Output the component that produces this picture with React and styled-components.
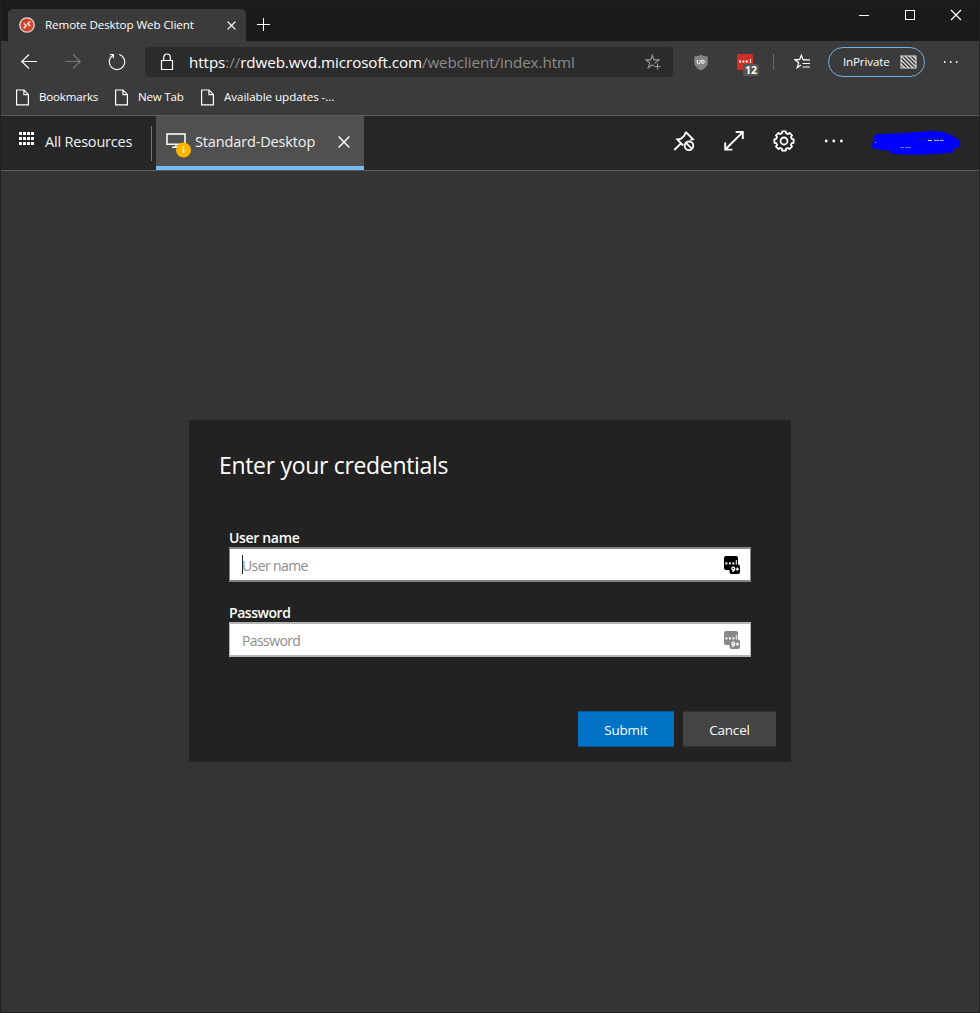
import React from "react";
import styled, { createGlobalStyle } from "styled-components";

const GlobalStyle = createGlobalStyle`
  * { box-sizing: border-box; }
  body { margin: 0; background: #333; font-family: "Open Sans", "Noto Sans", sans-serif; color: #fff; }
  svg { display: block; flex: none; }
  button, input { font-family: inherit; }
`;

const Window = styled.div`
  width: 980px;
  height: 1013px;
  display: flex;
  flex-direction: column;
  overflow: hidden;
  background: #343434;
  border: 1px solid #202020;
`;

const Label = styled.span`
  white-space: nowrap;
  font-size: ${(p) => p.$size}px;
  letter-spacing: ${(p) => p.$track || 0}px;
  line-height: 20px;
  color: ${(p) => p.$color || "#fff"};
`;

const TabStrip = styled.header`
  display: flex;
  height: 40px;
  flex: none;
  background: #1b1b1b;
  padding-left: 7px;
`;

const BrowserTab = styled.div`
  display: flex;
  align-items: center;
  width: 238px;
  height: 32px;
  margin-top: 8px;
  padding: 0 10px 0 11px;
  background: #3b3b3b;
  border-radius: 5px 5px 0 0;
`;

const TabTitle = styled(Label)`
  flex: 1;
  margin-left: 10px;
`;

const NewTab = styled.div`
  margin: 16px 0 0 11px;
`;

const WindowControls = styled.div`
  display: flex;
  margin-left: auto;
  padding: 8px 17px 0 0;
  gap: 34px;
`;

const Toolbar = styled.nav`
  display: flex;
  align-items: center;
  height: 42px;
  flex: none;
  background: #3b3b3b;
  padding-left: 19px;
`;

const NavIcons = styled.div`
  display: flex;
  gap: 26px;
  width: 125px;
`;

const AddressBar = styled.div`
  display: flex;
  align-items: center;
  width: 528px;
  height: 30px;
  padding: 0 11px 0 15px;
  background: #2b2b2b;
  border-radius: 4px;
`;

const Url = styled(Label)`
  flex: 1;
  margin-left: 15px;
`;

const Dim = styled.span`
  color: #8b8b8b;
`;

const Extensions = styled.div`
  display: flex;
  align-items: center;
  margin-left: 21px;
`;

const Manager = styled.div`
  position: relative;
  margin: 5px 14px 0 29px;
  width: 22px;
  height: 22px;
`;

const CountBadge = styled.span`
  position: absolute;
  left: 6px;
  top: 10px;
  width: 16px;
  height: 12px;
  border-radius: 2px;
  background: #565656;
  font: bold 10.5px/12px "Open Sans", sans-serif;
  text-align: center;
`;

const Separator = styled.div`
  width: 1px;
  height: ${(p) => p.$height}px;
  background: #666;
`;

const FavoritesSlot = styled.div`
  margin-left: 20px;
`;

const PrivatePill = styled.div`
  display: flex;
  align-items: center;
  justify-content: space-between;
  width: 97px;
  height: 30px;
  margin: 0 18px 0 17px;
  padding: 0 7px 0 14px;
  border: 1px solid #72b1e4;
  border-radius: 15px;
`;

const BookmarksBar = styled.div`
  display: flex;
  height: 33px;
  flex: none;
  padding: 0 14px;
  background: #3b3b3b;
  border-bottom: 1px solid #5c5c5c;
`;

const Bookmark = styled.div`
  display: flex;
  align-items: center;
  height: 28px;
  width: ${(p) => p.$width}px;
  gap: 9px;
`;

const AppBar = styled.div`
  display: flex;
  height: 55px;
  flex: none;
  background: #262626;
  border-bottom: 1px solid #5c5c5c;
`;

const AllResources = styled.div`
  display: flex;
  align-items: center;
  width: 150px;
  padding: 0 0 2px 18px;
  gap: 11px;
`;

const GridIcon = styled.div`
  margin-bottom: 7px;
`;

const BarDivider = styled(Separator)`
  margin: 10px 4px 0 0;
  background: #777;
`;

const ResourceTab = styled.div`
  display: flex;
  align-items: center;
  width: 208px;
  height: 54px;
  padding: 2px 14px 0 10px;
  background: #505050;
  border-bottom: 4px solid #6fbef5;
`;

const MonitorSlot = styled.div`
  margin-top: 5px;
`;

const ResourceName = styled(Label)`
  flex: 1;
  margin-left: 3px;
`;

const AppActions = styled.div`
  display: flex;
  align-items: center;
  margin-left: auto;
  padding: 0 16px 4px 0;
  gap: 28px;
`;

const AccountSlot = styled.div`
  margin: 4px 0 0 -3px;
`;

const Content = styled.main`
  flex: 1;
  padding: 249px 188px 0;
`;

const Dialog = styled.form`
  width: 602px;
  height: 342px;
  padding: 29px 15px 15px 30px;
  background: #222;
  border: 1px solid #262626;
  border-left: 0;
  border-right: 0;
`;

const Title = styled.h1`
  margin: 0;
  height: 78px;
  font-size: 23px;
  line-height: 30px;
  font-weight: 400;
  letter-spacing: -0.32px;
`;

const Field = styled.label`
  display: block;
  height: 75px;
  width: 522px;
  margin-left: 10px;
`;

const FieldName = styled.span`
  display: block;
  height: 19px;
  font-size: 14px;
  line-height: 20px;
  font-weight: 600;
  letter-spacing: ${(p) => p.$track}px;
  white-space: nowrap;
`;

const InputBox = styled.span`
  position: relative;
  display: flex;
  align-items: center;
  height: 35px;
  padding: 0 10px 0 12px;
  background: #fff;
  border: 1px solid ${(p) => (p.$focused ? "#858585" : "#b5b5b5")};
  border-bottom-width: 2px;
  border-top-width: 2px;
`;

const Input = styled.input`
  flex: 1;
  min-width: 0;
  height: 26px;
  padding: 1px 0 0;
  border: 0;
  outline: 0;
  background: transparent;
  font-size: 14px;
  letter-spacing: -0.6px;
  &::placeholder { color: #8c8c8c; opacity: 1; }
`;

const Caret = styled.i`
  position: absolute;
  left: 12px;
  top: 6px;
  width: 1px;
  height: 19px;
  background: #222;
`;

const Buttons = styled.div`
  display: flex;
  justify-content: flex-end;
  gap: 9px;
  margin-top: 33px;
`;

const Button = styled.button`
  width: ${(p) => (p.$primary ? 96 : 93)}px;
  height: 36px;
  padding: 2px 0 0;
  color: #fff;
  font-size: 13.4px;
  letter-spacing: -0.15px;
  border: solid ${(p) => (p.$primary ? "#08599a" : "#333")};
  border-width: 1px 0;
  background: ${(p) => (p.$primary ? "#0072c6" : "#444")};
`;

const Svg = ({ w, h, stroke = "#fff", sw = 1, children }) => (
  <svg width={w} height={h} viewBox={`0 0 ${w} ${h}`} fill="none" stroke={stroke} strokeWidth={sw}>
    {children}
  </svg>
);

const Cross = ({ size, sw }) => (
  <Svg w={size} h={size} sw={sw}>
    <path d={`M.6 .6L${size - 0.6} ${size - 0.6}M${size - 0.6} .6L.6 ${size - 0.6}`} />
  </Svg>
);

const Dots = ({ w, gap, r, start = 0.2 }) => (
  <Svg w={w} h={4} stroke="none">
    {[0, 1, 2].map((i) => (
      <circle key={i} cx={r + start + i * gap} cy="2" r={r} fill="#fff" />
    ))}
  </Svg>
);

const Favicon = () => (
  <Svg w={16} h={16}>
    <circle cx="8" cy="8" r="7.2" fill="#d6442a" stroke="#e3dcd9" strokeWidth="1.3" />
    <path d="M4.8 6.4L7.2 8.8L4.8 11.2M11.2 4.4L8.8 6.8L11.2 9.2" stroke="#fff" strokeWidth="1.3" />
  </Svg>
);

const PageIcon = () => (
  <Svg w={15} h={17} sw={1.2}>
    <path d="M1.6 1H9L13.4 5.4V15.9H1.6ZM8.9 1V5.6H13.4" />
  </Svg>
);

const PasswordIcon = ({ color }) => (
  <Svg w={16} h={18} stroke="none">
    <rect width="14" height="14" rx="2" fill={color} />
    <rect x="5.5" y="8.5" width="10.5" height="9.5" rx="2" fill={color} />
    <g fill="#fff">
      <rect x="1.4" y="6.4" width="2" height="2" />
      <rect x="4.9" y="6.4" width="2" height="2" />
      <rect x="8.4" y="6.4" width="2" height="2" />
      <rect x="11.8" y="4" width="1" height="4.6" />
    </g>
    <circle cx="9.2" cy="12.5" r="1.4" stroke="#fff" strokeWidth="1.2" />
    <path d="M10.5 12.5C10.5 14.5 10 15.4 8 15.4M11.6 13.1H15M13.3 11.4V14.8" stroke="#fff" strokeWidth="1.2" />
  </Svg>
);

const gearPath = (() => {
  const pts = [];
  for (let i = 0; i < 8; i++) {
    [[-15, 8], [-11, 9.8], [11, 9.8], [15, 8]].forEach(([off, r]) => {
      const a = ((i * 45 + off) * Math.PI) / 180;
      pts.push(`${(11 + r * Math.sin(a)).toFixed(2)} ${(11 - r * Math.cos(a)).toFixed(2)}`);
    });
  }
  return `M${pts.join("L")}Z`;
})();

const BrowserChrome = () => (
  <>
    <TabStrip>
      <BrowserTab>
        <Favicon />
        <TabTitle $size={11.6} $track={-0.09}>Remote Desktop Web Client</TabTitle>
        <Cross size={9} sw={1.3} />
      </BrowserTab>
      <NewTab>
        <Svg w={14} h={14}><path d="M6.5 1V14M0 7.5H13" /></Svg>
      </NewTab>
      <WindowControls>
        <Svg w={12} h={12}><path d="M1 6.5H11" /></Svg>
        <Svg w={12} h={12}><rect x="1.5" y="1.5" width="9" height="9" /></Svg>
        <Svg w={12} h={12} sw={1.2}><path d="M1 1L11 11M11 1L1 11" /></Svg>
      </WindowControls>
    </TabStrip>
    <Toolbar>
      <NavIcons>
        <Svg w={18} h={18} sw={1.1}><path d="M17 8.5H1.5M9 1.5L1.7 8.5L9 15.5" /></Svg>
        <Svg w={18} h={18} stroke="#777" sw={1.1}><path d="M1 8.5H16.5M9 1.5L16.3 8.5L9 15.5" /></Svg>
        <Svg w={18} h={18} sw={1.1}><path d="M11.2 1.5A7.7 7.7 0 1 1 5 2.3M1.9 1.5H5.4V5.3" /></Svg>
      </NavIcons>
      <AddressBar>
        <Svg w={14} h={18} sw={1.2}>
          <path d="M1.5 7.5H12.5V16.5H1.5ZM3.7 7.5V4.5A3.3 3.5 0 0 1 10.3 4.5V7.5" />
        </Svg>
        <Url $size={15.2} $track={-0.08}>
          https<Dim>://</Dim>rdweb.wvd.microsoft.com<Dim>/webclient/index.html</Dim>
        </Url>
        <Svg w={17} h={17} stroke="#999" sw={1.1}>
          <path d="M9.6 9.4L14 5.9H9L7.3 1.2L5.7 5.9H.8L4.7 8.9L3.2 13.8L7.3 10.9L9 12M12.5 9.5V15.5M9.5 12.5H15.5" />
        </Svg>
      </AddressBar>
      <Extensions>
        <svg width="14" height="17" viewBox="0 0 14 17">
          <path d="M7 .8C9 2 11 2.4 13.8 2.4V8C13.8 12 11 14.7 7 16.3C3 14.7 .2 12 .2 8V2.4C3 2.4 5 2 7 .8Z" fill="#858585" />
          <path d="M3.3 6V8.4A1.4 1.4 0 0 0 6.1 8.4V6M7.9 6V9.5H8.7A1.6 1.6 0 0 0 8.7 6.3H7.9" fill="none" stroke="#fff" />
        </svg>
        <Manager>
          <svg width="16" height="16" viewBox="0 0 16 16">
            <rect width="16" height="16" rx="1.5" fill="#d32d27" />
            <path d="M2 6.5h2v2h-2zM5.4 6.5h2v2h-2zM8.8 6.5h2v2h-2zM13 5h1v4h-1z" fill="#fff" />
          </svg>
          <CountBadge>12</CountBadge>
        </Manager>
        <Separator $height={16} />
      </Extensions>
      <FavoritesSlot>
        <Svg w={17} h={16} sw={1.2}>
          <path d="M10.6 5.6H9L7.3 1.3L5.6 5.6H.9L4.7 8.8L3.2 13.7L7 11M9.2 5.9H16M8.5 9.5H16M8.5 13H16" />
        </Svg>
      </FavoritesSlot>
      <PrivatePill>
        <Label $size={11.6} $track={-0.15}>InPrivate</Label>
        <Svg w={17} h={14}>
          <rect x="1" y="1" width="15" height="12" stroke="#ddd" />
          <path d="M1 9L5 13M1 5L9 13M1 1L13 13M5 1L16 12M9 1L16 8M13 1L16 4" stroke="#ddd" strokeWidth="1.3" />
        </Svg>
      </PrivatePill>
      <Dots w={16} gap={6} r={0.9} start={0.8} />
    </Toolbar>
    <BookmarksBar>
      <Bookmark $width={99}><PageIcon /><Label $size={11.6} $track={-0.22}>Bookmarks</Label></Bookmark>
      <Bookmark $width={86}><PageIcon /><Label $size={11.6} $track={-0.22}>New Tab</Label></Bookmark>
      <Bookmark $width={140}><PageIcon /><Label $size={11.6} $track={-0.04}>Available updates -...</Label></Bookmark>
    </BookmarksBar>
  </>
);

const ResourceBar = () => (
  <AppBar>
    <AllResources>
      <GridIcon>
        <svg width="15" height="13" viewBox="0 0 15 13" fill="#fff">
          {[0, 5, 10].flatMap((y) =>
            [0, 4, 8, 12].map((x) => <rect key={`${x}-${y}`} x={x} y={y} width="3" height="3" />)
          )}
        </svg>
      </GridIcon>
      <Label $size={14.5} $track={-0.2} $color="#f2f2f2">All Resources</Label>
    </AllResources>
    <BarDivider $height={35} />
    <ResourceTab>
      <MonitorSlot>
        <svg width="26" height="26" viewBox="0 0 26 26">
          <path d="M1 2H19V12.3H1ZM10 12V15M6 15.2H14" fill="none" stroke="#fff" strokeWidth="1.5" />
          <circle cx="17.5" cy="18" r="7.5" fill="#ffb500" />
          <path d="M16.8 14.3h1.5v1.5h-1.5zM16.8 16.8h1.5v4.2h-1.5z" fill="#fff" />
        </svg>
      </MonitorSlot>
      <ResourceName $size={14.5} $track={-0.14} $color="#f2f2f2">Standard-Desktop</ResourceName>
      <Cross size={12} sw={1.4} />
    </ResourceTab>
    <AppActions>
      <Svg w={22} h={22} sw={1.8}>
        <path d="M1.3 20L7.7 13.6M12.7 2L20 9.2L17.2 10M12.7 2L11.5 5.5L7.8 9L4.3 9.5L10.2 15.5" />
        <circle cx="16" cy="15.8" r="4.3" />
        <path d="M13 12.8L19 18.8" />
      </Svg>
      <Svg w={22} h={22} sw={1.9}>
        <path d="M2.3 19.5L19.7 2.1M12.7 2H19.8V9.1M2.2 12.5V19.6H9.3" />
      </Svg>
      <Svg w={22} h={22} sw={1.8}>
        <path d={gearPath} strokeLinejoin="round" />
        <circle cx="11" cy="11" r="3.5" />
      </Svg>
      <Dots w={22} gap={7.6} r={1.4} start={1.8} />
      <AccountSlot>
        <svg width="93" height="25" viewBox="0 0 93 25">
          <path d="M8 7C25 7 42 5 64 4C74 4 80 7 86 12M6 14C28 10 50 10 76 11M6 14C30 18 55 17 86 13M24 19C46 21 64 19 80 18" fill="none" stroke="#00f" strokeWidth="8" strokeLinecap="round" />
          <path d="M5 11.5h1M58 9.5h4M64 9.3h5M70 9.5h4" fill="none" stroke="#c9c9df" />
          <path d="M30 16.5h4M35 16.5h6" fill="none" stroke="#6a6aff" />
          <path d="M48 8.3C56 7.7 66 7.8 74 9" fill="none" stroke="#26264a" strokeWidth=".8" />
        </svg>
      </AccountSlot>
    </AppActions>
  </AppBar>
);

export default function App() {
  return (
    <Window>
      <GlobalStyle />
      <BrowserChrome />
      <ResourceBar />
      <Content>
        <Dialog onSubmit={(e) => e.preventDefault()}>
          <Title>Enter your credentials</Title>
          <Field>
            <FieldName $track={-0.33}>User name</FieldName>
            <InputBox $focused>
              <Caret />
              <Input placeholder="User name" />
              <PasswordIcon color="#000" />
            </InputBox>
          </Field>
          <Field>
            <FieldName $track={-0.45}>Password</FieldName>
            <InputBox>
              <Input type="password" placeholder="Password" />
              <PasswordIcon color="#888" />
            </InputBox>
          </Field>
          <Buttons>
            <Button $primary type="submit">Submit</Button>
            <Button type="button">Cancel</Button>
          </Buttons>
        </Dialog>
      </Content>
    </Window>
  );
}
